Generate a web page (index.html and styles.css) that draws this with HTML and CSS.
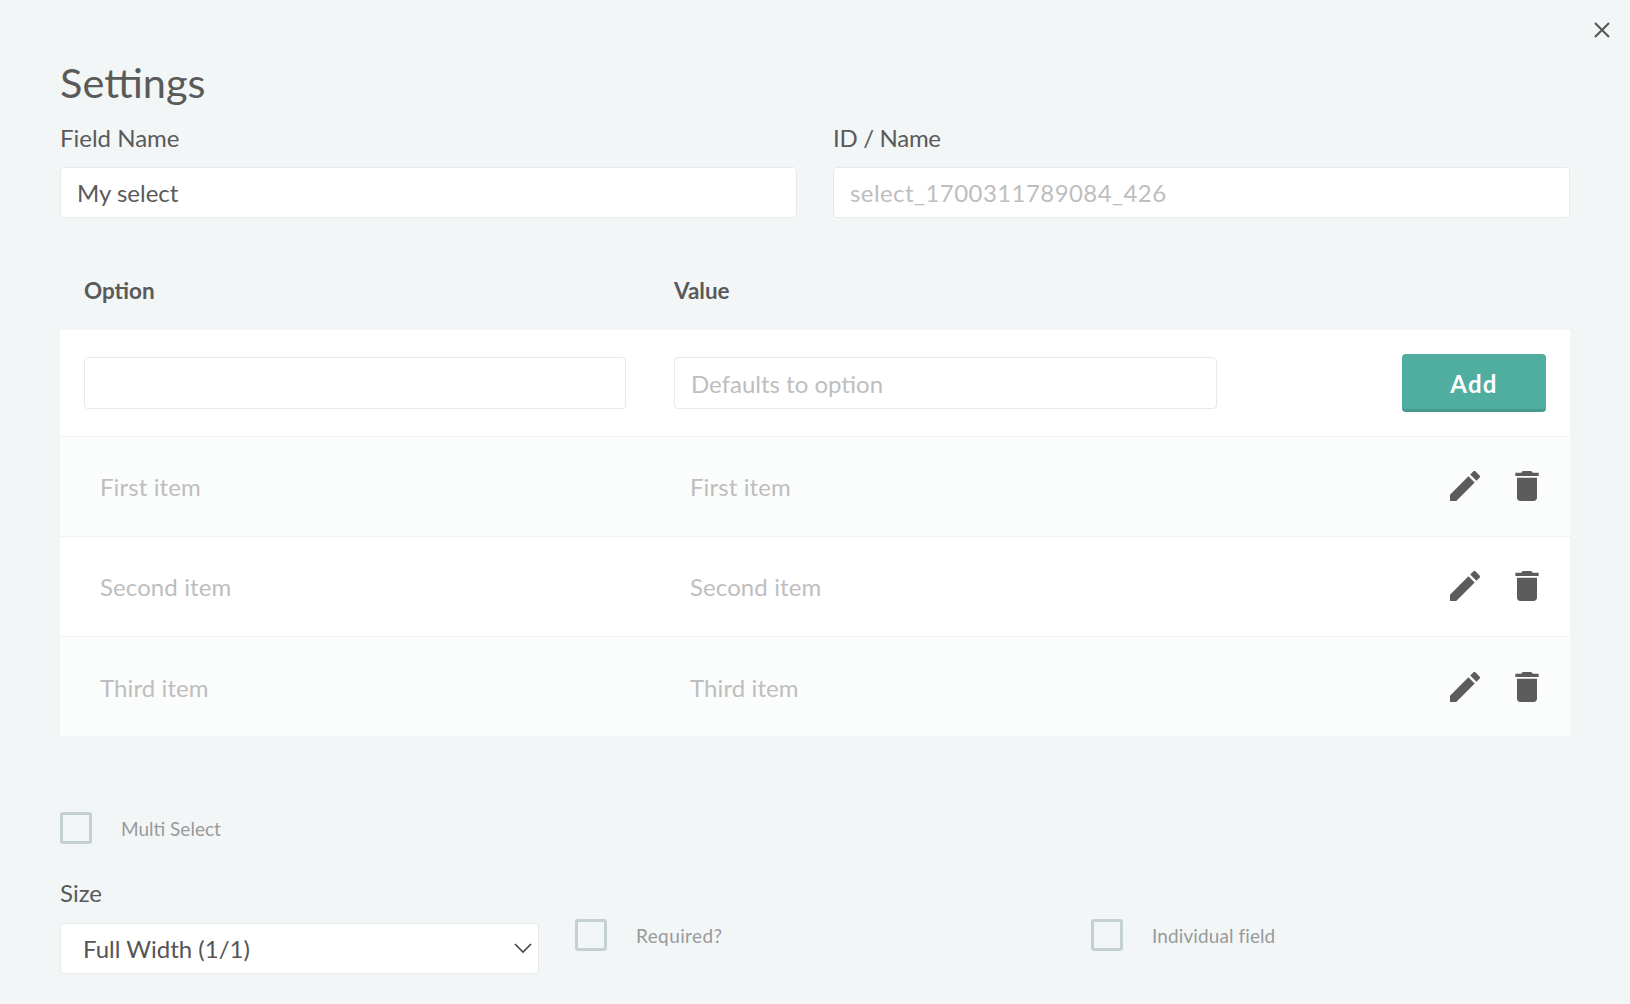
FILE: index.html
```html
<!DOCTYPE html>
<html lang="en">
<head>
<meta charset="utf-8">
<title>Settings</title>
<link rel="stylesheet" href="styles.css">
</head>
<body>
<main class="modal">
  <button class="close" type="button" aria-label="Close">
    <svg viewBox="0 0 16 16" width="16" height="16"><path d="M1 1l14 14M15 1L1 15" fill="none" stroke="#555" stroke-width="2"/></svg>
  </button>
  <h1 class="title">Settings</h1>
  <div class="fields">
    <label class="field"><span class="label">Field Name</span><input class="input" type="text" value="My select"></label>
    <label class="field"><span class="label label-id">ID / Name</span><input class="input input-id" type="text" placeholder="select_1700311789084_426"></label>
  </div>
  <div class="thead"><span>Option</span><span>Value</span></div>
  <section class="panel">
    <div class="row row-add">
      <input class="input input-opt" type="text">
      <input class="input input-val" type="text" placeholder="Defaults to option">
      <button class="add" type="button">Add</button>
    </div>
    <div class="row row-item alt">
      <span class="cell">First item</span><span class="cell">First item</span>
      <div class="actions">
        <svg class="icon" viewBox="0 0 24 24"><path d="M3 17.25V21h3.75L17.81 9.94l-3.75-3.75L3 17.25zM20.71 7.04c.39-.39.39-1.02 0-1.41l-2.34-2.34c-.39-.39-1.02-.39-1.41 0l-1.83 1.83 3.75 3.75 1.83-1.83z"/></svg>
        <svg class="icon" viewBox="0 0 24 24"><path d="M6 19c0 1.1.9 2 2 2h8c1.1 0 2-.9 2-2V7H6v12zM19 4h-3.5l-1-1h-5l-1 1H5v2h14V4z"/></svg>
      </div>
    </div>
    <div class="row row-item">
      <span class="cell">Second item</span><span class="cell">Second item</span>
      <div class="actions">
        <svg class="icon" viewBox="0 0 24 24"><path d="M3 17.25V21h3.75L17.81 9.94l-3.75-3.75L3 17.25zM20.71 7.04c.39-.39.39-1.02 0-1.41l-2.34-2.34c-.39-.39-1.02-.39-1.41 0l-1.83 1.83 3.75 3.75 1.83-1.83z"/></svg>
        <svg class="icon" viewBox="0 0 24 24"><path d="M6 19c0 1.1.9 2 2 2h8c1.1 0 2-.9 2-2V7H6v12zM19 4h-3.5l-1-1h-5l-1 1H5v2h14V4z"/></svg>
      </div>
    </div>
    <div class="row row-item alt">
      <span class="cell">Third item</span><span class="cell">Third item</span>
      <div class="actions">
        <svg class="icon" viewBox="0 0 24 24"><path d="M3 17.25V21h3.75L17.81 9.94l-3.75-3.75L3 17.25zM20.71 7.04c.39-.39.39-1.02 0-1.41l-2.34-2.34c-.39-.39-1.02-.39-1.41 0l-1.83 1.83 3.75 3.75 1.83-1.83z"/></svg>
        <svg class="icon" viewBox="0 0 24 24"><path d="M6 19c0 1.1.9 2 2 2h8c1.1 0 2-.9 2-2V7H6v12zM19 4h-3.5l-1-1h-5l-1 1H5v2h14V4z"/></svg>
      </div>
    </div>
  </section>
  <label class="check check-multi"><span class="box"></span><span class="check-text">Multi Select</span></label>
  <div class="bottom">
    <label class="field"><span class="label label-size">Size</span>
      <span class="select-wrap">
        <select class="select"><option>Full Width (1/1)</option></select>
        <svg class="chevron" viewBox="0 0 18 11" width="18" height="11"><path d="M1 1l8 8 8-8" fill="none" stroke="#444" stroke-width="1.6"/></svg>
      </span>
    </label>
    <label class="check check-req"><span class="box"></span><span class="check-text">Required?</span></label>
    <label class="check check-ind"><span class="box"></span><span class="check-text">Individual field</span></label>
  </div>
</main>
</body>
</html>
```
FILE: styles.css
```css
* { box-sizing: border-box; }
html, body { margin: 0; height: 100%; }
body {
  background: #f2f6f7;
  color: #5a5a5a;
  font-family: "Lato", "Noto Sans", sans-serif;
  overflow: hidden;
}
.modal { position: relative; padding: 59px 60px 0; }
.close {
  position: absolute; top: 22px; right: 20px;
  padding: 0; border: 0; background: none; display: flex;
}
.title { margin: 0; font-size: 41.5px; line-height: 46px; font-weight: 400; color: #5a5a5a; }
.fields { display: grid; grid-template-columns: 737px 737px; column-gap: 36px; margin-top: 19px; }
.field { display: block; }
.label { display: block; font-size: 24px; line-height: 28px; color: #5a5a5a; margin-bottom: 15px; }
.label-id { letter-spacing: -.3px; }
.label-size { margin-top: -2px; margin-bottom: 16px; }
.input {
  display: block; width: 100%; height: 51px;
  padding: 0 16px; background: #fff;
  border: 1px solid #e7eaea; border-radius: 4px;
  font: 400 24px "Lato", sans-serif; color: #5a5a5a; outline: none;
}
.input-id { letter-spacing: .43px; }
.input::placeholder { color: #bebebe; opacity: 1; }
.thead { display: grid; grid-template-columns: 590px 1fr; padding: 60px 0 0 24px; height: 112px; font-size: 22.5px; line-height: 26px; font-weight: 700; color: #5a5a5a; }
.panel { background: #fff; }
.row { display: grid; grid-template-columns: 590px 1fr auto; align-items: center; padding: 0 24px 0 24px; }
.row-add { height: 107px; border-bottom: 1px solid #f1f3f3; grid-template-columns: 542px 543px 1fr; column-gap: 48px; }
.input-opt, .input-val { height: 52px; }
.input-val { padding-top: 1px; }
.add {
  justify-self: end; width: 144px; height: 58px; padding: 4px 0 0;
  background: #4fae9f; border: 0; border-bottom: 3px solid #459a8a; border-radius: 4px;
  color: #fff; font: 700 24px "Lato", sans-serif; letter-spacing: 1.2px;
}
.row-item { height: 100px; padding-bottom: 2px; border-bottom: 1px solid #f1f3f3; }
.row-item:last-child { height: 99px; padding-bottom: 0; border-bottom: 0; }
.alt { background: #fbfcfc; }
.cell { padding: 2px 0 0 16px; font-size: 24px; letter-spacing: .1px; color: #bebebe; }
.actions { display: flex; gap: 22px; margin-right: -1px; }
.icon { width: 40px; height: 40px; fill: #5c5c5c; display: block; }
.check { display: flex; align-items: center; gap: 29px; }
.check-multi { margin-top: 76px; }
.box { flex: none; width: 32px; height: 32px; border: 3px solid #c5d0d0; border-radius: 3px; }
.check-text { font-size: 19px; color: #9a9a9a; }
.check-req .check-text { letter-spacing: .4px; }
.check-ind .check-text { letter-spacing: .1px; }
.bottom { display: grid; grid-template-columns: 479px 480px 1fr; column-gap: 36px; margin-top: 37px; align-items: start; }
.bottom .check { margin-top: 38px; }
.select-wrap { display: block; position: relative; }
.select {
  display: block; width: 100%; height: 51px;
  padding: 0 22px; appearance: none; background: #fff;
  border: 1px solid #e7eaea; border-radius: 4px;
  font: 400 24px "Lato", sans-serif; color: #555;
}
.chevron { position: absolute; right: 7px; top: 20px; }
```
